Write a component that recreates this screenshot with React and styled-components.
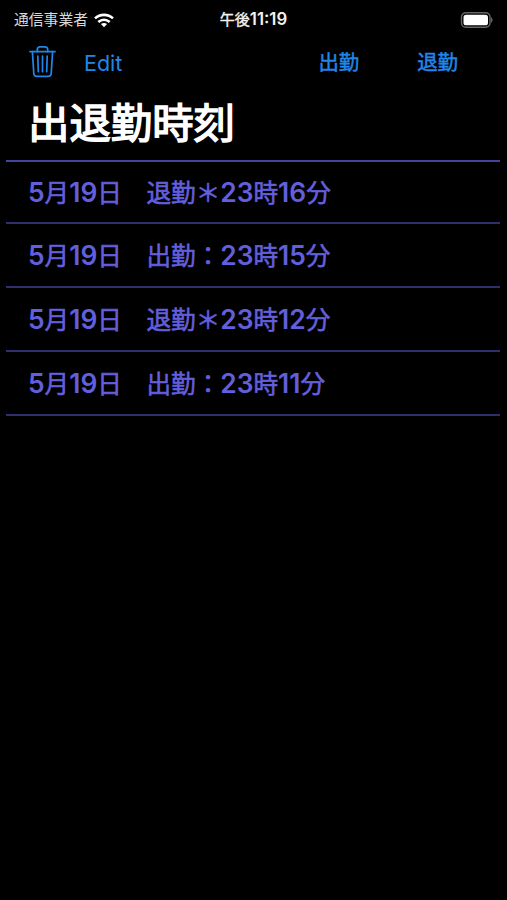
import React from 'react';
import styled, { createGlobalStyle } from 'styled-components';

const GlobalStyle = createGlobalStyle`
  body {
    margin: 0;
    background: #000;
    font-family: Inter, "Noto Sans CJK JP", sans-serif;
  }
`;

const Screen = styled.div`
  width: 507px;
  height: 900px;
  overflow: hidden;
  background: #000;
  color: #fff;
`;

const StatusBar = styled.div`
  display: grid;
  grid-template-columns: 1fr auto 1fr;
  align-items: center;
  height: 40px;
  padding: 0 14px;
  box-sizing: border-box;
  line-height: 20px;
`;

const Carrier = styled.div`
  display: flex;
  align-items: center;
  gap: 6px;
  font-size: 14.8px;
  color: #d8d8d8;
`;

const Clock = styled.div`
  font-size: 15px;
  color: #f2f2f2;
  -webkit-text-stroke: 0.4px currentColor;
`;

const BatteryIcon = styled.svg`
  justify-self: end;
`;

const NavBar = styled.div`
  display: flex;
  align-items: center;
  height: 45px;
  padding: 0 49px 0 29px;
`;

const NavButton = styled.button`
  border: 0;
  padding: 0;
  background: none;
  color: #2087e8;
  font-family: inherit;
  font-size: ${(props) => props.$size || '20.4px'};
  line-height: ${(props) => props.$line || '31px'};
  display: flex;
  margin-left: ${(props) => props.$gap || '0'};
  -webkit-text-stroke: ${(props) => (props.$strong ? '0.5px currentColor' : '0')};
`;

const Title = styled.h1`
  margin: 0;
  height: 75px;
  box-sizing: border-box;
  padding: 1px 0 0 28px;
  font-size: 41.4px;
  font-weight: 400;
  line-height: 75px;
  -webkit-text-stroke: 1.5px currentColor;
`;

const List = styled.ul`
  list-style: none;
  margin: 0 7px 0 6px;
  padding: 0;
  border-top: 2px solid #44449c;
`;

const Row = styled.li`
  height: 64px;
  box-sizing: border-box;
  padding: 1px 0 0 22px;
  border-bottom: 2px solid #302e6c;
  color: #625fdc;
  font-size: 24.6px;
  line-height: 63px;
  white-space: pre;
  -webkit-text-stroke: 0.6px currentColor;

  &:first-child {
    height: 62px;
    line-height: 60px;
  }
`;

const Digits = styled.span`
  font-size: ${(props) => props.$size};
  font-weight: 600;
  font-kerning: none;
  line-height: 1;
  -webkit-text-stroke: 0;
`;

const records = [
  '5月19日　退勤＊23時16分',
  '5月19日　出勤：23時15分',
  '5月19日　退勤＊23時12分',
  '5月19日　出勤：23時11分',
];

// digits are set a little larger and heavier than the kanji around them
const MixedText = ({ text, size }) =>
  text.split(/([\d:]+)/).map((part, i) =>
    i % 2 ? <Digits key={i} $size={size}>{part}</Digits> : part
  );

const Wifi = () => (
  <svg width="20" height="15" viewBox="0 0 20 15" fill="none" stroke="#fff" strokeWidth="2.6">
    <path d="M1 5.4C6 .7 14 .7 19 5.4" />
    <path d="M4.3 9C7.6 6 12.4 6 15.7 9" />
    <path d="M10 14.2 6.9 11.1C8.7 9.6 11.3 9.6 13.1 11.1Z" fill="#fff" stroke="none" />
  </svg>
);

const Battery = () => (
  <BatteryIcon width="33" height="17" viewBox="0 0 33 17">
    <rect x="1.5" y="0.8" width="28.5" height="14.5" rx="4.3" fill="none" stroke="#666" strokeWidth="1.4" />
    <rect x="3.5" y="2.8" width="24.5" height="10.5" rx="2.6" fill="#fff" />
    <path d="M31 5.3c2 .8 2 4.7 0 5.5Z" fill="#666" />
  </BatteryIcon>
);

const Trash = () => (
  <svg width="27" height="34" viewBox="0 0 27 34" fill="none" stroke="currentColor" strokeWidth="1.7" strokeLinecap="round" strokeLinejoin="round">
    <path d="M1 5.7H26" />
    <path d="M8.3 5.7V3.6Q8.3 .9 11 .9H16Q18.7 .9 18.7 3.6V5.7" />
    <path d="M3.4 5.7 4.8 27.5Q5 30.4 7.7 30.4H19.3Q22 30.4 22.2 27.5L23.6 5.7" />
    <path d="M8.8 10.2 9.3 25.7M13.5 10.2V25.7M18.2 10.2 17.7 25.7" />
  </svg>
);

const App = () => {
  return (
    <Screen>
      <GlobalStyle />
      <StatusBar>
        <Carrier>
          通信事業者
          <Wifi />
        </Carrier>
        <Clock>
          <MixedText text="午後11:19" size="16.8px" />
        </Clock>
        <Battery />
      </StatusBar>
      <NavBar>
        <NavButton aria-label="削除">
          <Trash />
        </NavButton>
        <NavButton $size="21.5px" $line="28px" $gap="28px">Edit</NavButton>
        <NavButton $strong $gap="auto">出勤</NavButton>
        <NavButton $strong $gap="58px">退勤</NavButton>
      </NavBar>
      <Title>出退勤時刻</Title>
      <List>
        {records.map((record) => (
          <Row key={record}>
            <MixedText text={record} size="26.4px" />
          </Row>
        ))}
      </List>
    </Screen>
  );
};

export default App;
